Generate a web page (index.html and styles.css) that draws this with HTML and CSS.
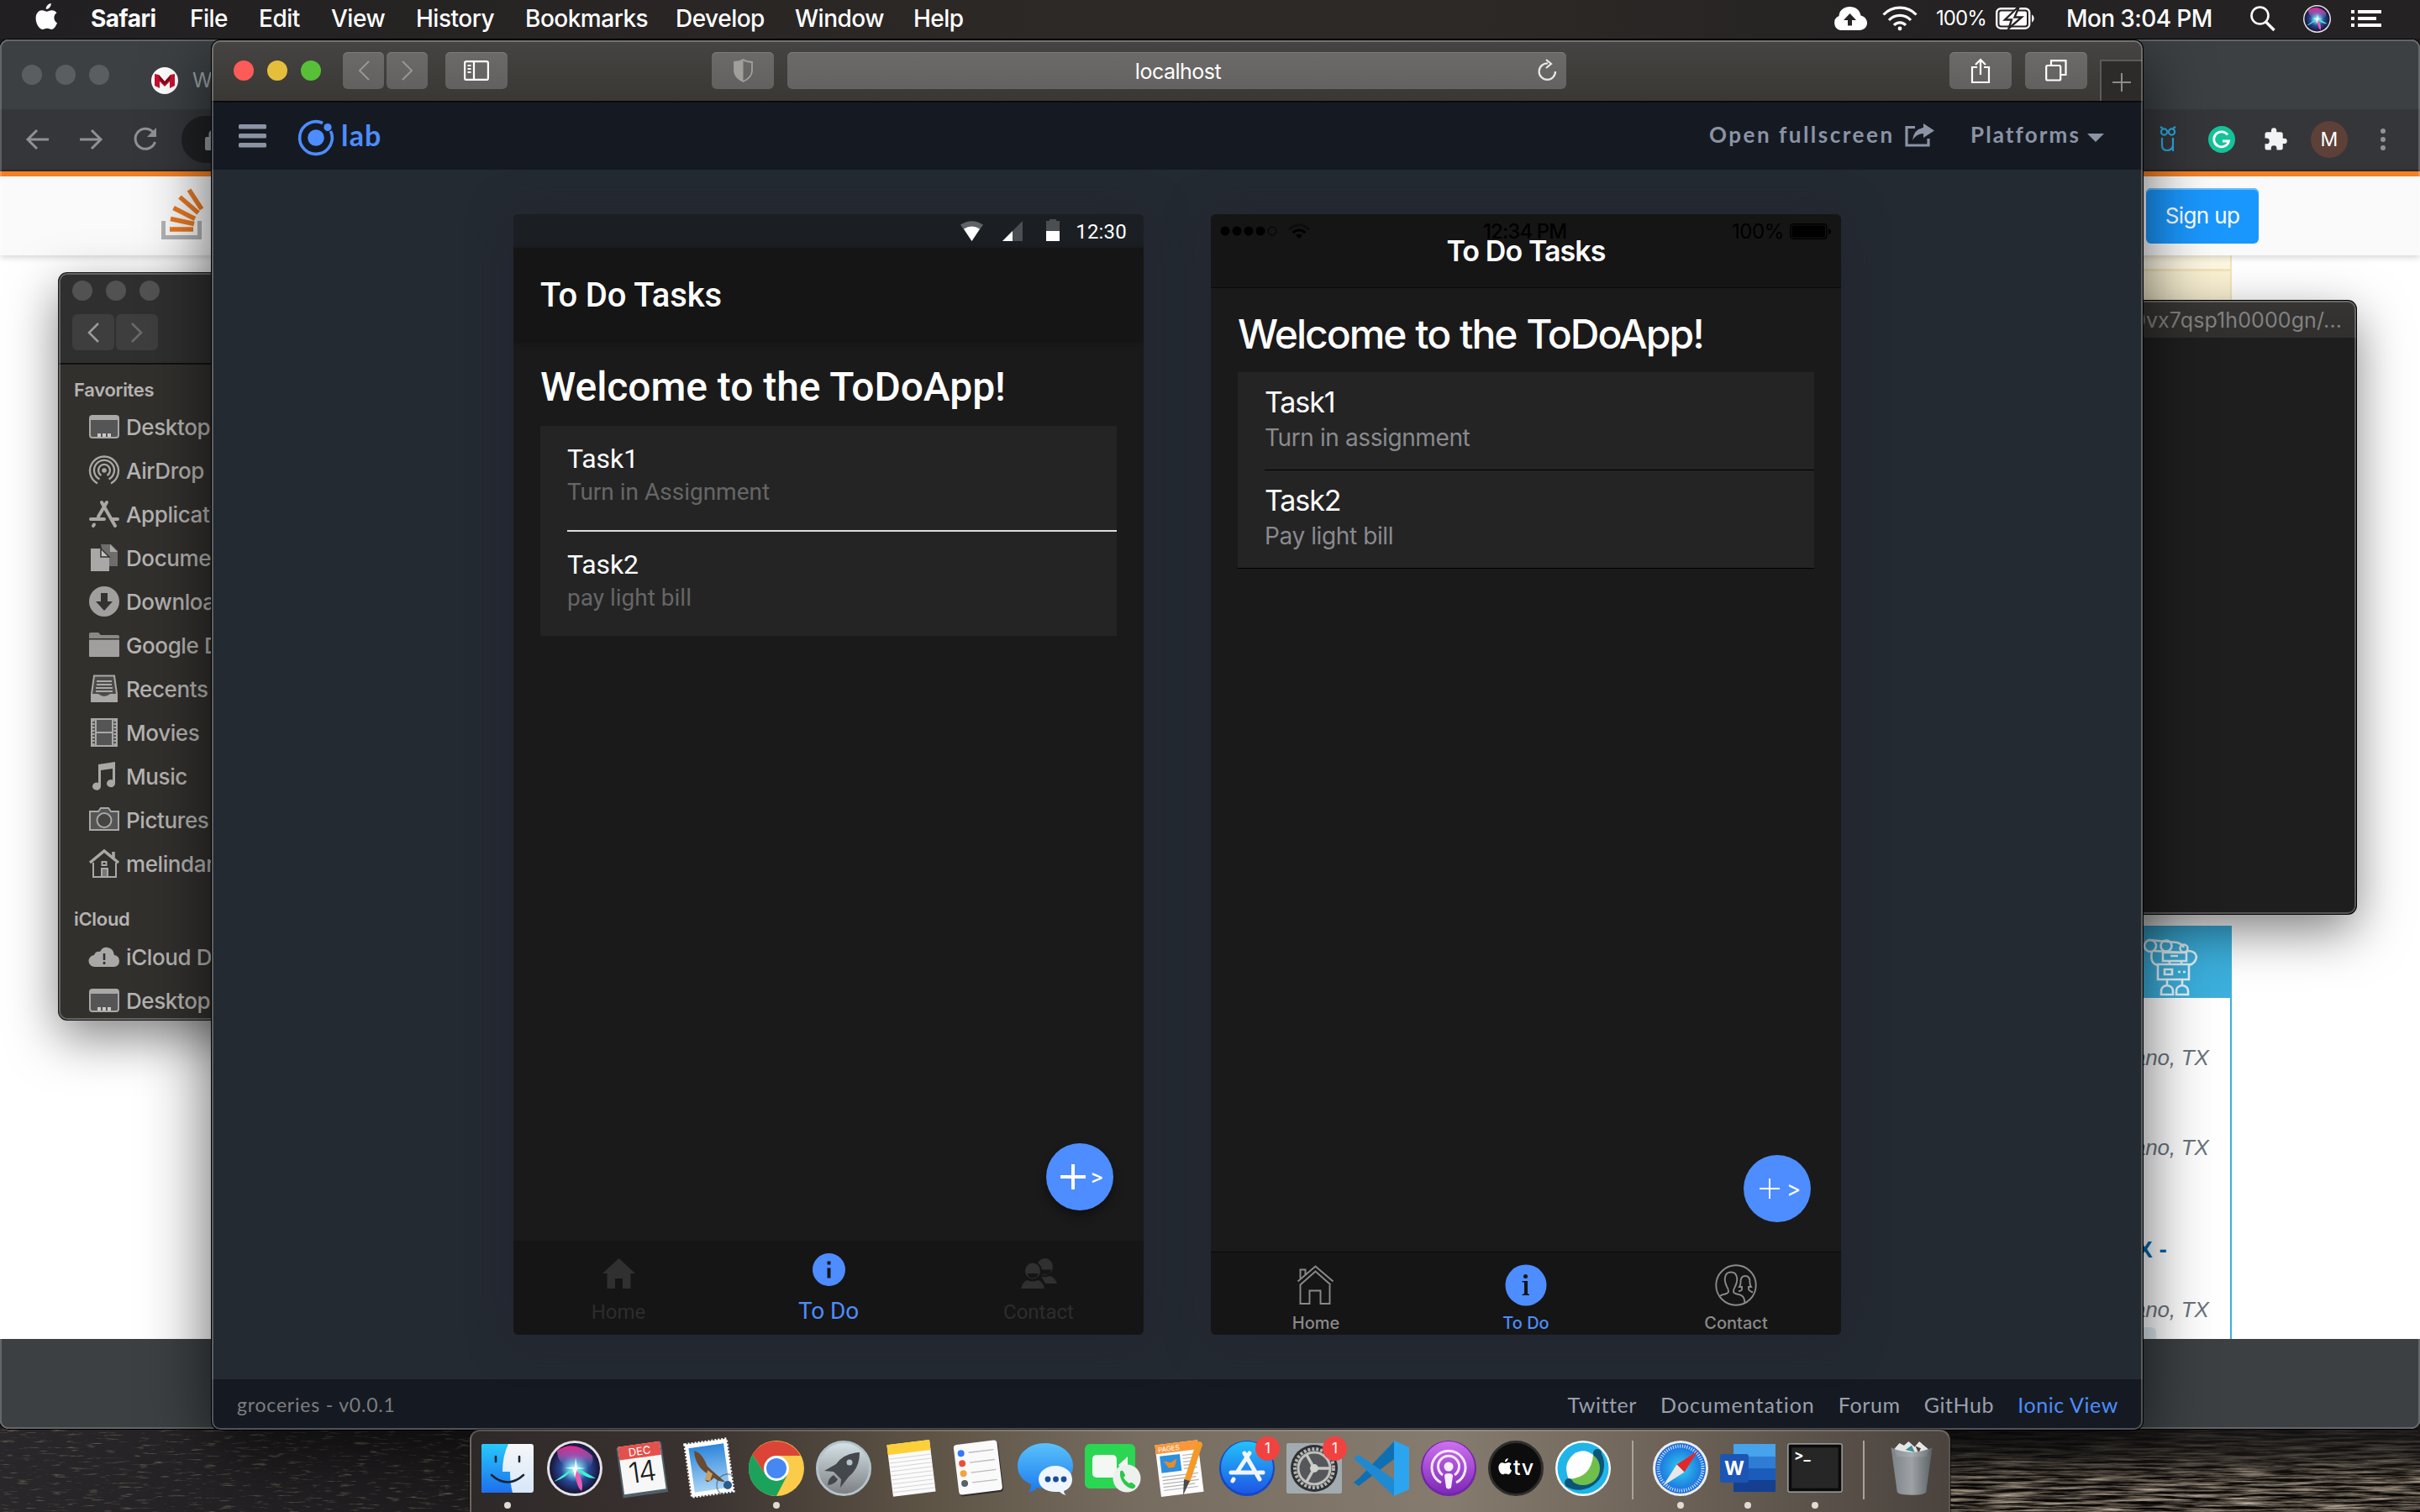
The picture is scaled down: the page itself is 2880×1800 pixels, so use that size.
FILE: index.html
```html
<!DOCTYPE html>
<html lang="en">
<head>
<meta charset="utf-8">
<title>Ionic Lab</title>
<link rel="stylesheet" href="styles.css">
</head>
<body>
<div class="desktop">
  <svg class="wood" width="2880" height="100" viewBox="0 0 2880 100" preserveAspectRatio="none">
    <defs>
      <filter id="grain" x="0" y="0" width="100%" height="100%" color-interpolation-filters="sRGB">
        <feTurbulence type="fractalNoise" baseFrequency="0.018 0.33" numOctaves="5" seed="7"/>
        <feColorMatrix values="1.7 0 0 0 -0.56  1.6 0 0 0 -0.54  1.45 0 0 0 -0.5  0 0 0 0 1"/>
      </filter>
      <filter id="flecks" x="0" y="0" width="100%" height="100%" color-interpolation-filters="sRGB">
        <feTurbulence type="fractalNoise" baseFrequency="0.05 0.4" numOctaves="4" seed="3"/>
        <feColorMatrix values="0 0 0 0 .5  0 0 0 0 .45  0 0 0 0 .38  4 0 0 0 -2.400"/>
      </filter>
      <linearGradient id="woodshade" x1="0" y1="0" x2="0" y2="1"><stop offset="0" stop-color="#141213" stop-opacity=".9"/><stop offset=".3" stop-color="#1c1a19" stop-opacity=".72"/><stop offset=".6" stop-color="#2c2824" stop-opacity=".25"/><stop offset="1" stop-color="#2c2824" stop-opacity=".15"/></linearGradient>
      <linearGradient id="woodbase" x1="0" y1="0" x2="1" y2="0"><stop offset="0" stop-color="#29272a"/><stop offset="1" stop-color="#1b191a"/></linearGradient>
    </defs>
    <rect width="700" height="100" fill="url(#woodbase)"/>
    <rect width="700" height="100" filter="url(#flecks)" opacity=".6"/>
    <svg x="2200" width="680" height="100"><rect width="680" height="100" filter="url(#grain)"/></svg>
    <rect x="2200" width="680" height="100" fill="url(#woodshade)"/>
  </svg>

  <header class="menubar">
    <svg class="apple" width="27" height="32" viewBox="0 0 27 32"><path fill="#fff" d="M18.8 0c.3 3.500-2.600 7-6 7C12.400 3.600 15.500.4 18.800 0zM26 23.300c-1.600 4-3.700 7.600-6.600 7.600-2 0-2.700-1.200-5.300-1.200s-3.400 1.200-5.300 1.200C4.700 30.900.6 24.200.6 17.700.6 11.500 4.400 8.300 8 8.300c2.400 0 4.200 1.500 5.700 1.500 1.400 0 3.500-1.600 6.300-1.600 1.900.1 4 .9 5.500 3-4.500 2.900-3.900 9.600.5 12.100z"/></svg>
    <nav class="menus"><b>Safari</b><span>File</span><span>Edit</span><span>View</span><span>History</span><span>Bookmarks</span><span>Develop</span><span>Window</span><span>Help</span></nav>
    <div class="status">
      <svg width="41" height="28" viewBox="0 0 41 28"><path fill="#fff" d="M9 28a9 9 0 0 1-1.500-17C8 4 13.500 0 20.500 0 27 0 32.500 4 33.500 10.500 38 11.500 41 15 41 19.500 41 24 37 28 32 28z"/><path fill="#262324" d="M20.500 8l7.500 8h-5v6.500h-5V16h-5z"/></svg>
      <svg class="s-wifi" width="42" height="30" viewBox="0 0 42 30" fill="none" stroke="#fff" stroke-width="3.200"><path d="M1.500 10.500a27 27 0 0 1 39 0M8 17a18 18 0 0 1 26 0M14 23a9.500 9.500 0 0 1 14 0"/><circle cx="21" cy="27" r="2.400" fill="#fff" stroke="none"/></svg>
      <span class="s-pct">100%</span>
      <svg class="s-bat" width="46" height="26" viewBox="0 0 46 26"><rect x="1.200" y="1.200" width="39" height="23.500" rx="5" fill="none" stroke="#fff" stroke-width="2.400"/><rect x="4.500" y="4.500" width="32.500" height="17" rx="2" fill="#fff"/><path d="M43 8.500c3.500 1 3.500 8 0 9z" fill="#fff"/><path d="M25 1L11 14.500h8L15.500 25 31 11.500h-8.500L27 1z" fill="#fff" stroke="#262324" stroke-width="2.400"/></svg>
      <span class="s-time">Mon 3:04 PM</span>
      <svg class="s-find" width="30" height="30" viewBox="0 0 30 30" fill="none" stroke="#fff" stroke-width="2.600"><circle cx="11.500" cy="11.500" r="10"/><path d="M18.500 19l10 10" stroke-width="3.400"/></svg>
      <svg class="s-siri" width="33" height="33" viewBox="0 0 66 66"><use href="#siri"/></svg>
      <svg class="s-list" width="36" height="20" viewBox="0 0 36 20" fill="#fff"><path d="M0 0h4v4H0zM0 8h4v4H0zM0 16h4v4H0zM8 0h28v4H8zM8 8h22v4H8zM8 16h28v4H8z"/></svg>
    </div>
  </header>

  <section class="window chrome">
    <div class="c-tabs">
      <i class="light"></i><i class="light"></i><i class="light"></i>
      <svg class="c-fav" width="32" height="32" viewBox="0 0 32 32"><circle cx="16" cy="16" r="16" fill="#fff"/><path d="M4 8l5 1 7 8 7-8 5-1v14l-6 3v-8l-6 6-6-6v8l-6-3z" fill="#c4122f"/><path d="M9 9l7 8 7-8-1 6-6 6-6-6z" fill="#7d0b1c"/></svg>
      <span>W</span>
    </div>
    <div class="c-bar">
      <svg width="27" height="26" viewBox="0 0 27 26" fill="none" stroke="#8f9194" stroke-width="3"><path d="M27 13H2M13 2L2 13l11 11"/></svg>
      <svg width="27" height="26" viewBox="0 0 27 26" fill="none" stroke="#8f9194" stroke-width="3"><path d="M0 13h25M14 2l11 11-11 11"/></svg>
      <svg width="28" height="28" viewBox="0 0 28 28" fill="none" stroke="#8f9194" stroke-width="3"><path d="M24 6.500A12 12 0 1 0 25.500 17"/><path d="M27 0v11H16z" fill="#8f9194" stroke="none"/></svg>
      <div class="omni"><svg width="22" height="26" viewBox="0 0 22 26"><path d="M6 11V7a5 5 0 0 1 10 0v4" fill="none" stroke="#9aa0a6" stroke-width="3"/><rect x="0" y="10" width="22" height="16" rx="2" fill="#9aa0a6"/></svg></div>
      <div class="exts">
        <svg width="20" height="30" viewBox="0 0 20 30" fill="none" stroke="#29a9df" stroke-width="2.200"><circle cx="5.500" cy="6" r="3.600"/><circle cx="14.500" cy="6" r="3.600"/><path d="M1 0l3 2M19 0l-3 2M3 13v9q0 6 6 6t7-6v-9M16 20v9"/></svg>
        <svg width="32" height="32" viewBox="0 0 32 32"><circle cx="16" cy="16" r="16" fill="#15c39a"/><path d="M23 10.500A9 9 0 1 0 24.500 18H17" fill="none" stroke="#fff" stroke-width="2.800"/></svg>
        <svg class="puzzle" width="30" height="30" viewBox="0 0 24 24"><path fill="#f1f3f4" d="M20.500 11H19V7a2 2 0 0 0-2-2h-4V3.500a2.500 2.500 0 0 0-5 0V5H4a2 2 0 0 0-2 2v3.800h1.500a2.700 2.700 0 0 1 0 5.400H2V20a2 2 0 0 0 2 2h3.800v-1.500a2.700 2.700 0 0 1 5.400 0V22H17a2 2 0 0 0 2-2v-4h1.500a2.500 2.500 0 0 0 0-5z"/></svg>
        <b class="avatar">M</b>
        <svg width="6" height="26" viewBox="0 0 6 26" fill="#8f9194"><circle cx="3" cy="3" r="3"/><circle cx="3" cy="13" r="3"/><circle cx="3" cy="23" r="3"/></svg>
      </div>
    </div>
    <div class="so-head">
      <svg width="50" height="60" viewBox="0 0 50 60"><path d="M2.500 38v19.500h43V38" fill="none" stroke="#b1b3b5" stroke-width="5"/><g stroke="#e87922" stroke-width="5.500"><path d="M10 48h28M11 35.500l28 6M14.500 22.500l25.500 13M22 9.500l22 19M33 1l15 23"/></g></svg>
      <a class="signup">Sign up</a>
    </div>
    <div class="so-page">
      <div class="so-yellow"></div>
      <aside class="jobs">
        <div class="robot">
          <svg width="64" height="68" viewBox="0 0 64 68" fill="none" stroke="#e8f4fa" stroke-width="2.600"><ellipse cx="8" cy="8" rx="7" ry="7"/><path d="M6 1l34 3q6 2 8 6M12 14l34 2"/><circle cx="27" cy="8" r="6.500"/><circle cx="48" cy="11" r="4.500"/><path d="M23 16h28v10H23zM32 20h9M31 26v4M45 26v4M17 30h37v18H17zM25 36h9v6h-9zM41 39h3M47 39h3M10 15q-3 14 7 16M52 14q10 0 11 7-1 8-9 10M28 48v7M46 48v7M21 66v-4q0-6 7-7 7 1 7 7v4zM39 66v-4q0-6 7-7 7 1 7 7v4z"/></svg>
        </div>
        <p>ano, TX</p><p class="j2">ano, TX</p><h4>X -</h4><p class="j3">ano, TX</p><i class="chip"></i>
      </aside>
    </div>
    <div class="c-foot"></div>
  </section>

  <section class="window terminal">
    <div class="t-title">0vx7qsp1h0000gn/...</div>
  </section>

  <section class="window finder">
    <div class="f-head">
      <div class="f-lights"><i class="light"></i><i class="light"></i><i class="light"></i></div>
      <div class="f-nav">
        <span><svg width="14" height="24" viewBox="0 0 14 24" fill="none" stroke="#9b9b9b" stroke-width="2.600"><path d="M13 1L2 12l11 11"/></svg></span>
        <span><svg width="14" height="24" viewBox="0 0 14 24" fill="none" stroke="#6a6a6a" stroke-width="2.600"><path d="M1 1l11 11L1 23"/></svg></span>
      </div>
    </div>
    <div class="f-side">
      <h5>Favorites</h5>
      <ul>
        <li><svg viewBox="0 0 36 36"><rect x="1" y="5" width="34" height="26" rx="3" fill="#555" stroke="#a9a8a6" stroke-width="2"/><path d="M1 8h34" stroke="#a9a8a6" stroke-width="4"/><path d="M10 28h4M16 28h4M22 28h4" stroke="#c9c8c6" stroke-width="4"/></svg>Desktop</li>
        <li><svg viewBox="0 0 36 36" fill="none" stroke="#a9a8a6" stroke-width="2.300"><path d="M10 33.500a17 17 0 1 1 16 0M12.500 28.500a12 12 0 1 1 11 0M14.500 24a7 7 0 1 1 7 0"/><circle cx="18" cy="18" r="2.800" fill="#a9a8a6" stroke="none"/></svg>AirDrop</li>
        <li><svg viewBox="0 0 36 36" fill="none" stroke="#a9a8a6" stroke-width="4" stroke-linecap="round"><path d="M15 4l16 28M21 4L11 21M6 30.500L5 32M2 24h16M27 24h7"/></svg>Applicati</li>
        <li><svg viewBox="0 0 36 36"><path d="M14 2h12l8 8v18H20z" fill="#6e6d6b"/><path d="M25 2l9 9h-9z" fill="#a9a8a6"/><path d="M2 7h13l9 9v18H2z" fill="#a9a8a6"/><path d="M14 7l10 10H14z" fill="#c4c3c1" stroke="#333230" stroke-width="1.500"/></svg>Docume</li>
        <li><svg viewBox="0 0 36 36"><circle cx="18" cy="18" r="18" fill="#a09f9d"/><path d="M14 8h8v10h6L18 29 8 18h6z" fill="#333230"/></svg>Downloa</li>
        <li><svg viewBox="0 0 36 36"><path d="M0 10V5q0-2 2-2h9l3 3h20q2 0 2 2v2z" fill="#8a8987"/><path d="M0 11.500h36V31q0 1-1 1H1q-1 0-1-1z" fill="#a09f9d"/></svg>Google D</li>
        <li><svg viewBox="0 0 36 36"><path d="M6 2.500h24L33 24v9H3v-9z" fill="#4c4b49" stroke="#a9a8a6" stroke-width="2"/><path d="M9 9h18M9 13h18M8 17h20M8 21h20" stroke="#a9a8a6" stroke-width="1.800"/><path d="M3 24h8q7 6 14 0h8v9H3z" fill="#a9a8a6"/></svg>Recents</li>
        <li><svg viewBox="0 0 36 36"><rect x="3" y="2" width="30" height="32" fill="#555" stroke="#a9a8a6" stroke-width="2"/><path d="M8 2v32M28 2v32M8 18h20" stroke="#a9a8a6" stroke-width="2"/><path d="M5 3v30M31 3v30" stroke="#a9a8a6" stroke-width="3" stroke-dasharray="2 2"/></svg>Movies</li>
        <li><svg viewBox="0 0 36 36" fill="#a9a8a6"><path d="M11 4l20-3v25.500a5 4.500 0 1 1-3-4V9l-14 2v19a5 4.500 0 1 1-3-4z"/></svg>Music</li>
        <li><svg viewBox="0 0 36 36"><path d="M1 8h10l3-4h9l3 4h9v22H1z" fill="#555" stroke="#a9a8a6" stroke-width="2"/><circle cx="18" cy="18.500" r="8.500" fill="#444" stroke="#a9a8a6" stroke-width="2"/></svg>Pictures</li>
        <li><svg viewBox="0 0 36 36" fill="none" stroke="#a9a8a6" stroke-width="2"><path d="M5 17v17h27V17"/><path d="M1 17L18 3l17 14" stroke-width="3.500"/><path d="M29 4v7" stroke-width="3.500"/><path d="M15.500 16h5v4h-5z"/><path d="M15 34V24h7v10z" fill="#777"/></svg>melindar</li>
      </ul>
      <h5>iCloud</h5>
      <ul>
        <li><svg viewBox="0 0 36 36"><path d="M7 30a7 7 0 0 1-1-14q2-5 7-4 3-6 9-5 7 1 8 9 6 1 6 7 0 6-6 7z" fill="#a9a8a6"/><path d="M18 14v8M18 24v3" stroke="#333230" stroke-width="2.600"/></svg>iCloud D</li>
        <li><svg viewBox="0 0 36 36"><rect x="1" y="5" width="34" height="26" rx="3" fill="#555" stroke="#a9a8a6" stroke-width="2"/><path d="M1 8h34" stroke="#a9a8a6" stroke-width="4"/><path d="M10 28h4M16 28h4M22 28h4" stroke="#c9c8c6" stroke-width="4"/></svg>Desktop</li>
      </ul>
    </div>
  </section>

  <section class="window safari">
    <div class="toolbar">
      <div class="lights"><i class="red"></i><i class="yellow"></i><i class="green"></i></div>
      <span class="tb b-back"><svg width="14" height="24" viewBox="0 0 14 24" fill="none" stroke="#989794" stroke-width="2"><path d="M13 1L2 12l11 11"/></svg></span>
      <span class="tb b-fwd"><svg width="14" height="24" viewBox="0 0 14 24" fill="none" stroke="#989794" stroke-width="2"><path d="M1 1l11 11L1 23"/></svg></span>
      <span class="tb b-side"><svg width="30" height="24" viewBox="0 0 30 24" fill="none" stroke="#fff" stroke-width="2.200"><rect x="1.100" y="1.100" width="27.800" height="21.800" rx="2"/><path d="M12 1v22M4.500 6h4M4.500 10h4M4.500 14h4"/></svg></span>
      <span class="tb b-shield"><svg width="23" height="28" viewBox="0 0 23 28"><path d="M11.500 1Q16 4 22 4v10q0 8-10.500 13Q1 22 1 14V4q6 0 10.500-3z" fill="none" stroke="#a09f9c" stroke-width="1.800"/><path d="M11.500 1v26Q1 22 1 14V4q6 0 10.500-3z" fill="#a09f9c"/></svg></span>
      <div class="url"><span>localhost</span><svg width="24" height="26" viewBox="0 0 24 26" fill="none" stroke="#e8e8e8" stroke-width="2.200"><path d="M13 4.500a9.700 9.700 0 1 0 9 9.500"/><path d="M11 0l6 5-6 5"/></svg></div>
      <span class="tb b-share"><svg width="24" height="31" viewBox="0 0 24 31" fill="none" stroke="#fff" stroke-width="2.200"><path d="M8 11H2v18h20V11h-6M12 20V2M6 8l6-6 6 6"/></svg></span>
      <span class="tb b-tabs"><svg width="26" height="26" viewBox="0 0 26 26" fill="none" stroke="#fff" stroke-width="2.200"><rect x="1.200" y="7" width="17" height="17.500" rx="1.500"/><path d="M7 7V1.200h17.500V18H19"/></svg></span>
      <span class="newtab"><svg width="22" height="22" viewBox="0 0 22 22" stroke="#8c8b88" stroke-width="2"><path d="M11 0v22M0 11h22"/></svg></span>
    </div>
    <div class="lab-head">
      <svg width="33" height="28" viewBox="0 0 33 28" fill="#8b93a5"><rect width="33" height="5.500" rx="1.500"/><rect y="11" width="33" height="5.500" rx="1.500"/><rect y="22" width="33" height="5.500" rx="1.500"/></svg>
      <svg class="ionic" width="42" height="42" viewBox="0 0 42 42"><path d="M29 3.500A19.300 19.300 0 1 0 38.500 13" fill="none" stroke="#4d8dff" stroke-width="3.600"/><circle cx="21" cy="21" r="9.800" fill="#4d8dff"/><circle cx="35" cy="8.500" r="4.600" fill="#4d8dff"/></svg>
      <span class="lab">lab</span>
      <span class="full">Open fullscreen</span>
      <svg class="full-i" width="35" height="28" viewBox="0 0 35 28"><path d="M12 4.500H2V26h26v-8" fill="none" stroke="#8b93a5" stroke-width="3.200"/><path d="M22 0l13 8.500-13 8.500v-5q-8 0-13 8 1-13 13-15z" fill="#8b93a5"/></svg>
      <span class="plat">Platforms</span><i class="tri"></i>
    </div>
    <main class="lab-body">
      <article class="phone md">
        <div class="md-status">
          <svg width="27" height="24" viewBox="0 0 27 24"><path d="M0 4.500Q13.500-4 27 4.500L13.500 24z" fill="#5f6366"/><path d="M4 9.500q9.500-6 19 0L13.500 24z" fill="#fff"/></svg>
          <svg class="md-sig" width="24" height="24" viewBox="0 0 24 24"><path d="M24 0v24H0z" fill="#4b4e52"/><path d="M12 12v12H0z" fill="#fff"/></svg>
          <svg class="md-bat" width="16" height="26" viewBox="0 0 16 26"><path d="M4 0h8v2h4v24H0V2h4z" fill="#4b4e52"/><path d="M0 14h16v12H0z" fill="#fff"/></svg>
          <span>12:30</span>
        </div>
        <div class="md-title">To Do Tasks</div>
        <div class="content">
          <h1>Welcome to the ToDoApp!</h1>
          <div class="item"><h2>Task1</h2><p>Turn in Assignment</p></div>
          <div class="item"><h2>Task2</h2><p>pay light bill</p></div>
          <div class="fab"><svg width="30" height="30" viewBox="0 0 30 30" stroke="#fff" stroke-width="4"><path d="M15 0v30M0 15h30"/></svg><span>&gt;</span></div>
        </div>
        <nav class="tabs">
          <a><svg width="39" height="36" viewBox="0 0 39 36" fill="#303030"><path d="M19.500 0L39 18h-5.500v18H24V24h-9v12H5.500V18H0z"/></svg><span>Home</span></a>
          <a class="on"><svg width="39" height="39" viewBox="0 0 39 39"><circle cx="19.500" cy="19.500" r="19.500" fill="#4d8dff"/><path d="M17.500 9.500h4v4h-4zM17.500 17.500h4v12h-4z" fill="#151515"/></svg><span>To Do</span></a>
          <a><svg width="43" height="36" viewBox="0 0 43 36" fill="#303030"><ellipse cx="28.500" cy="10" rx="9.500" ry="10"/><path d="M24 21q3 2.500 10 0 6 1 9 9H29z"/><path d="M22 13.500h14q-1 5-5 5.500h-6z" fill="#151515"/><ellipse cx="14" cy="15" rx="10" ry="10.500" stroke="#151515" stroke-width="2"/><path d="M0 36q2-8 7.500-10 6.500 3 13 0 5.500 2 7.500 10z"/><path d="M7.500 18h13q-1 5.500-6.500 5.500T7.500 18z" fill="#151515"/></svg><span>Contact</span></a>
        </nav>
      </article>
      <article class="phone ios">
        <div class="ios-status">
          <svg width="68" height="12" viewBox="0 0 68 12"><circle cx="6" cy="6" r="5.500"/><circle cx="20" cy="6" r="5.500"/><circle cx="34" cy="6" r="5.500"/><circle cx="48" cy="6" r="5.500"/><circle cx="62" cy="6" r="5" fill="none" stroke="#000"/></svg>
          <svg class="i-wifi" width="26" height="18" viewBox="0 0 26 18" fill="none" stroke="#000" stroke-width="3"><path d="M1 7q12-10 24 0" stroke="#0c0c0c"/><path d="M5.500 11q7.500-6.500 15 0"/><path d="M9 14q4-3 8 0l-4 4z" fill="#000" stroke="none"/></svg>
          <span class="i-time">12:34 PM</span>
          <span class="i-pct">100%</span>
          <svg width="49" height="19" viewBox="0 0 49 19"><rect x=".8" y=".8" width="43" height="17.400" rx="3" fill="none" stroke="#000" stroke-width="1.400"/><rect x="2.500" y="2.500" width="39.500" height="14" rx="1.500"/><path d="M46 6q3 1 3 3.500T46 13z"/></svg>
        </div>
        <div class="ios-title">To Do Tasks</div>
        <div class="content">
          <h1>Welcome to the ToDoApp!</h1>
          <div class="item"><h2>Task1</h2><p>Turn in assignment</p></div>
          <div class="item"><h2>Task2</h2><p>Pay light bill</p></div>
          <div class="fab"><svg width="24" height="24" viewBox="0 0 24 24" stroke="#fff" stroke-width="2"><path d="M12 0v24M0 12h24"/></svg><span>&gt;</span></div>
        </div>
        <nav class="tabs">
          <a><svg width="46" height="50" viewBox="0 0 46 50" fill="none" stroke="#8a8a8a" stroke-width="1.900"><path d="M4.500 23.500V47h11V31.500h13V47h11V23.500M1.500 20.500l21-18 21 18M4.500 24.500L22.500 8.500l18 16M4.500 18V6.500h6v6"/></svg><span>Home</span></a>
          <a class="on"><svg width="50" height="50" viewBox="0 0 50 50"><circle cx="25" cy="25" r="24.500" fill="#4d8dff"/><circle cx="24.500" cy="14.500" r="2.500" fill="#151515"/><path d="M20.500 20h6.500v15l2 1v1h-8.500v-1l2.500-1V21.500h-2.500z" fill="#151515"/></svg><span>To Do</span></a>
          <a><svg width="50" height="50" viewBox="0 0 50 50" fill="none" stroke="#8a8a8a" stroke-width="1.900"><circle cx="25" cy="25" r="23.700"/><path d="M6 38q2-2 6-2.500 4-1 4-3 0-3-2-6-3-6-2-11 1-6 7-6t7 6q1 5-2 11-2 3-2 6 0 2 4 3 8 1 9 7 .500 2 0 4M28 32q4 0 4-2.500V27h-3q2-3 1.500-7 .500-6 5.500-6t5.500 6q-.500 4 1.500 7h-3v2.500q0 2 5 4"/></svg><span>Contact</span></a>
        </nav>
      </article>
    </main>
    <footer class="lab-foot"><span class="ver">groceries - v0.0.1</span><a>Twitter</a><a class="wide">Documentation</a><a>Forum</a><a>GitHub</a><a class="hot">Ionic View</a></footer>
  </section>

  <footer class="dock">
    <div class="app run"><svg viewBox="0 0 66 66"><defs><linearGradient id="fl" x1="0" y1="0" x2="0" y2="1"><stop offset="0" stop-color="#27c9fb"/><stop offset="1" stop-color="#1e6fee"/></linearGradient><linearGradient id="fr" x1="0" y1="0" x2="0" y2="1"><stop offset="0" stop-color="#f6f7f9"/><stop offset="1" stop-color="#d7e6f9"/></linearGradient></defs><rect x="2" y="4" width="62" height="58" rx="3" fill="url(#fr)"/><path d="M5 4h29q-7 14-7 33h9q0 14 3 25H5q-3 0-3-3V7q0-3 3-3z" fill="url(#fl)"/><path d="M14 41q19 17 38 0M19 19v6M47 19v6" fill="none" stroke="#1b2532" stroke-width="2.600" stroke-linecap="round"/></svg></div>
    <div class="app"><svg viewBox="0 0 66 66"><defs><radialGradient id="sg"><stop offset="0" stop-color="#fff"/><stop offset=".2" stop-color="#7fd6f0"/><stop offset=".55" stop-color="#2a4a98"/><stop offset="1" stop-color="#171335"/></radialGradient><linearGradient id="sp" x1="0" y1="0" x2="0" y2="1"><stop offset="0" stop-color="#e02a8c"/><stop offset=".5" stop-color="#c85cc0" stop-opacity=".6"/><stop offset="1" stop-color="#20b8c8" stop-opacity="0"/></linearGradient></defs><g id="siri"><circle cx="33" cy="33" r="33" fill="#e4e2e4"/><circle cx="33" cy="33" r="30" fill="url(#sg)"/><path d="M12 12q20-14 42 6 4 18-21 15Q12 30 12 12z" fill="url(#sp)"/><path d="M33 31L8 49q15-4 25-18zM34 31l24 14q-16 0-24-14z" fill="#3ff0d0"/><path d="M33 32q12 16 8 28-7-6-8-28z" fill="#f05ab0"/><path d="M33 32l1-12 2 12 10 1-10 1-3 10-2-10-10-2z" fill="#fff" opacity=".9"/></g></svg></div>
    <div class="app"><svg viewBox="0 0 66 66"><g transform="rotate(-8 33 33)"><rect x="6" y="5" width="54" height="60" fill="#4f6069"/><rect x="8" y="4" width="50" height="57" fill="#f7f7f7"/><rect x="8" y="4" width="50" height="16" fill="#e4504c"/><text x="33" y="17" font-size="13" fill="#fff" text-anchor="middle">DEC</text><text x="33" y="49" font-size="34" fill="#1c1c1c" font-weight="300" text-anchor="middle" textLength="33">14</text></g></svg></div>
    <div class="app"><svg viewBox="0 0 66 66"><defs><linearGradient id="ml" x1="0" y1="0" x2="0" y2="1"><stop offset="0" stop-color="#2f86dc"/><stop offset="1" stop-color="#a8d4f4"/></linearGradient></defs><g transform="rotate(-8 33 33)"><rect x="8" y="1" width="50" height="63" fill="#fff" stroke="#fff" stroke-width="3" stroke-dasharray="2 2"/><rect x="12" y="6" width="42" height="53" fill="url(#ml)"/><path d="M18 10q9 3 13 20l4 5 15 17q-9-2-13-7-3 3-8 4l-3-3 4-7q-13-10-12-29z" fill="#6b4a30"/><path d="M31 35l5 5-4 8-6-2z" fill="#c9a063"/></g><circle cx="55" cy="53" r="13" fill="none" stroke="#33424f" stroke-width="1.500" opacity=".5"/><circle cx="55" cy="53" r="5" fill="#2b5c8b"/></svg></div>
    <div class="app run"><svg viewBox="0 0 66 66"><circle cx="33" cy="33" r="33" fill="#fccb49"/><path d="M4.400 16.500A33 33 0 0 1 61.600 18H33L20 40.500z" fill="#dc4437"/><path d="M4.400 16.500A33 33 0 0 0 33 66L46 41 33 48 20 40.500z" fill="#1da25c"/><circle cx="33" cy="33" r="15" fill="#fff"/><circle cx="33" cy="33" r="12" fill="#4688f1"/></svg></div>
    <div class="app"><svg viewBox="0 0 66 66"><defs><linearGradient id="lp" x1="0" y1="0" x2="0" y2="1"><stop offset="0" stop-color="#d6e4e9"/><stop offset="1" stop-color="#7c7e81"/></linearGradient></defs><circle cx="33" cy="33" r="31.500" fill="url(#lp)" stroke="#b4c3cb" stroke-width="3"/><path d="M52 14Q33 15 24 28L10 36l11 1 9 9-1 10 10-13Q52 33 52 14z" fill="#44484d"/><path d="M21 41l5 5q-3 6-12 7 1-9 7-12z" fill="#44484d"/><circle cx="40" cy="26" r="3.500" fill="#b4c3cb"/></svg></div>
    <div class="app"><svg viewBox="0 0 66 66"><g transform="rotate(-7 33 33)"><rect x="8" y="2" width="51" height="62" fill="#fbfbfb"/><rect x="8" y="2" width="51" height="12" fill="#fdd039"/><path d="M8 19h51M8 24h51M8 29h51M8 34h51M8 39h51M8 44h51M8 49h51M8 54h51M8 59h51" stroke="#d5d5d5"/></g></svg></div>
    <div class="app"><svg viewBox="0 0 66 66"><g transform="rotate(-7 33 33)"><rect x="8" y="4" width="52" height="60" rx="4" fill="#2c2c2e"/><rect x="7" y="2" width="52" height="60" rx="4" fill="#fafafa"/><circle cx="15" cy="13" r="4" fill="#3478f6"/><circle cx="15" cy="25" r="4" fill="#ea4e3d"/><circle cx="15" cy="37" r="4" fill="#f1a33c"/><circle cx="15" cy="49" r="4" fill="#5b6069"/><path d="M24 13h30M24 25h30M24 37h30M24 49h30" stroke="#bbb" stroke-width="1.300"/></g></svg></div>
    <div class="app"><svg viewBox="0 0 66 66"><defs><linearGradient id="ms" x1="0" y1="0" x2="0" y2="1"><stop offset="0" stop-color="#5ac2fa"/><stop offset="1" stop-color="#1d7bf0"/></linearGradient></defs><path d="M33 3c19 0 33 12 33 27S52 57 33 57q-6 0-10-1-3 5-11 5 5-3 4-9Q0 45 0 30C0 15 14 3 33 3z" fill="url(#ms)"/><path d="M45 30c11 0 20 7 20 16 0 7-4 12-10 14q0 3 3 5-5-1-8-4h-5c-11 0-20-6-20-15s9-16 20-16z" fill="#eef5fc"/><circle cx="36" cy="46" r="3.400" fill="#174e96"/><circle cx="45.500" cy="46" r="3.400" fill="#174e96"/><circle cx="55" cy="46" r="3.400" fill="#174e96"/></svg></div>
    <div class="app"><svg viewBox="0 0 66 66"><rect x="0" y="4" width="60" height="53" rx="6" fill="#2bd653"/><rect x="9" y="17" width="29" height="27" rx="5" fill="#f4f8f4"/><path d="M40 29l11-10v24z" fill="#f4f8f4"/><circle cx="50" cy="45" r="16.500" fill="#edf1ee"/><path d="M42 37q2-3 4 0l2 4q0 2-2 3 3 5 7 7 2-2 3-1l4 3q1 2-2 4-5 1-11-5-6-7-5-15z" fill="#2bc84d"/></svg></div>
    <div class="app"><svg viewBox="0 0 66 66"><g transform="rotate(-7 33 33)"><rect x="7" y="2" width="51" height="62" fill="#fdfdfd"/><rect x="7" y="2" width="51" height="11" fill="#f9973a"/><text x="10" y="11" font-size="8" fill="#fff">PAGES</text><rect x="11" y="16" width="24" height="20" fill="#2b8fe0"/><path d="M15 22l8 3 8-4-4 10h-7z" fill="#ef8a1c"/><path d="M38 18h16M38 22h16M38 26h16M38 30h16M38 34h16M11 41h43M11 45h40M11 49h43M11 53h38M11 57h41" stroke="#b3b3b3" stroke-width="1.200"/></g><path d="M52 4q4-5 7-2 2 2 0 6L45 50l-7-2z" fill="#f39a2b"/><path d="M45 48l-8 17 1-19z" fill="#4a4b4d"/></svg></div>
    <div class="app"><svg viewBox="0 0 66 66"><defs><linearGradient id="as" x1="0" y1="0" x2="0" y2="1"><stop offset="0" stop-color="#24c2fa"/><stop offset="1" stop-color="#1d55e6"/></linearGradient></defs><circle cx="33" cy="33" r="33" fill="#1348c4"/><circle cx="33" cy="32" r="31" fill="url(#as)"/><path d="M30 15l18 31M36 15L21 38M17 46l-1 2M14 38h26M47 38h5" stroke="#f1f5fa" stroke-width="5" stroke-linecap="round"/></svg><b class="badge">1</b></div>
    <div class="app"><svg viewBox="0 0 66 66"><rect x="0" y="3" width="66" height="60" rx="2" fill="#a2abb0"/><circle cx="33" cy="33" r="28" fill="#2f3032"/><circle cx="33" cy="33" r="23" fill="#45474a" stroke="#b4b4b2" stroke-width="4" stroke-dasharray="3 2"/><circle cx="33" cy="33" r="19" fill="#55575a" stroke="#c0c0be" stroke-width="3"/><path d="M33 33l18 0M33 33l-9-16M33 33l-9 16" stroke="#c6c6c4" stroke-width="3.500"/><circle cx="33" cy="33" r="5" fill="#d0d0ce"/></svg><b class="badge">1</b></div>
    <div class="app"><svg viewBox="0 0 66 66"><path d="M48 1L8 43l-8 7 6 4 42-32z" fill="#0f6fb3"/><path d="M6 17l-6 4 48 45V46z" fill="#1f8ad2"/><path d="M48 0l18 8v50l-18 8z" fill="#2ba5f0"/></svg></div>
    <div class="app"><svg viewBox="0 0 66 66"><defs><linearGradient id="pc" x1="0" y1="0" x2="0" y2="1"><stop offset="0" stop-color="#cd70f0"/><stop offset="1" stop-color="#7e29b8"/></linearGradient></defs><circle cx="33" cy="33" r="33" fill="#7424a8"/><circle cx="33" cy="32" r="31" fill="url(#pc)"/><g fill="none" stroke="#f4e9fa" stroke-width="3"><path d="M24 50a20 20 0 1 1 18 0"/><path d="M26 41a12.500 12.500 0 1 1 14 0"/></g><circle cx="33" cy="31" r="5.500" fill="#f7effb"/><path d="M28 42q0-3 5-3t5 3l-2 14q-3 3-6 0z" fill="#f7effb"/></svg></div>
    <div class="app"><svg viewBox="0 0 66 66"><circle cx="33" cy="33" r="31.500" fill="#0c0c0c" stroke="#2e2e2e" stroke-width="3"/><path transform="translate(12 21) scale(.62)" fill="#fff" d="M18.800 0c.3 3.500-2.600 7-6 7C12.400 3.600 15.500.4 18.800 0zM26 23.300c-1.600 4-3.700 7.600-6.600 7.600-2 0-2.700-1.200-5.300-1.200s-3.400 1.200-5.300 1.200C4.700 30.900.6 24.200.6 17.700.6 11.500 4.400 8.300 8 8.300c2.400 0 4.200 1.500 5.700 1.500 1.400 0 3.500-1.600 6.300-1.600 1.900.1 4 .9 5.500 3-4.500 2.900-3.900 9.600.5 12.100z"/><text x="30" y="41" font-size="25" font-weight="500" fill="#fff" textLength="24">tv</text></svg></div>
    <div class="app"><svg viewBox="0 0 66 66"><circle cx="33" cy="33" r="33" fill="#fff"/><circle cx="33" cy="33" r="30.500" fill="#20b5e8"/><path d="M53 12A30 30 0 0 1 12 54z" fill="#0b5577"/><circle cx="33" cy="33" r="20" fill="#70bf4b"/><path d="M45 17Q43 44 16 46 8 28 22 16q12-8 23 1z" fill="#fff"/><circle cx="50" cy="15" r="5" fill="#0b5577"/><circle cx="16" cy="50" r="5" fill="#0b5577"/></svg></div>
    <i class="sep"></i>
    <div class="app run"><svg viewBox="0 0 66 66"><defs><radialGradient id="sf"><stop offset="0" stop-color="#2fd0ee"/><stop offset="1" stop-color="#1a66de"/></radialGradient></defs><circle cx="33" cy="33" r="33" fill="#eceef0"/><circle cx="33" cy="33" r="30" fill="url(#sf)"/><circle cx="33" cy="33" r="26.500" fill="none" stroke="#e4f1fb" stroke-width="4" stroke-dasharray="1 1.800"/><path d="M54 12L37.500 37.500 28.500 28.500z" fill="#e5252a"/><path d="M12 54l16.500-25.500 9 9z" fill="#e8e8e8"/></svg></div>
    <div class="app run"><svg viewBox="0 0 66 66"><path d="M16 4h50v15H16z" fill="#46a3ec"/><path d="M16 19h50v14H16z" fill="#2f7cd4"/><path d="M16 33h50v14H16z" fill="#1b5bbb"/><path d="M16 47h50v14H16z" fill="#153f90"/><rect x="0" y="16" width="34" height="34" rx="3" fill="#1c55b3"/><text x="17" y="41" font-size="23" font-weight="700" fill="#fff" text-anchor="middle">W</text></svg></div>
    <div class="app run"><svg viewBox="0 0 66 66"><rect x="1" y="4" width="64" height="57" rx="2" fill="#262626" stroke="#a9adaf" stroke-width="1.500"/><rect x="3.500" y="6.500" width="59" height="52" fill="none" stroke="#0a0a0a" stroke-width="3.500"/><text x="8" y="23" font-size="17" font-weight="700" fill="#fff">&gt;_</text></svg></div>
    <i class="sep s2"></i>
    <div class="app trash"><svg viewBox="0 0 66 72"><defs><linearGradient id="tr"><stop offset="0" stop-color="#7f868b"/><stop offset=".5" stop-color="#a4a9ad"/><stop offset="1" stop-color="#5d6468"/></linearGradient></defs><path d="M10 12l7-8 6 3 6-5 8 7 6-7 6 5 7 6-4 9H14z" fill="#e6e6e4"/><path d="M25 13l8-6 4 9z" fill="#3a8f9b"/><path d="M38 8l7 3-3 6z" fill="#4b3b3a"/><path d="M6 10q26 12 54 0l-8 58q-1 4-19 4t-19-4z" fill="url(#tr)" opacity=".93"/></svg></div>
  </footer>
</div>
</body>
</html>
```
FILE: styles.css
```css
* { box-sizing: border-box; }
body { margin: 0; background: #1c1a1a; font-family: Inter, "Liberation Sans", sans-serif; }
h1, h2, h4, h5, p, ul { margin: 0; padding: 0; font-weight: 400; }
svg { display: block; flex: none; overflow: visible; }
.desktop { position: relative; width: 2880px; height: 1800px; overflow: hidden; }
.wood { position: absolute; left: 0; top: 1700px; overflow: hidden; }

.menubar { position: absolute; inset: 0 0 auto 0; height: 46px; background: linear-gradient(90deg, #211f21, #2d2926 45%, #2d2926 60%, #242223 80%); display: flex; align-items: center; color: #fff; font-size: 28px; line-height: 44px; z-index: 1; }
.apple { margin: -6px 39px 0 42px; }
.menus { display: grid; grid-template-columns: 118px 82px 86px 101px 130px 179px 142px 141px 80px; letter-spacing: -.5px; font-weight: 500; margin-top: -2px; }
.menus b { font-weight: 700; }
.status { display: flex; align-items: center; margin-left: auto; padding-right: 46px; font-weight: 500; margin-top: -2px; }
.s-wifi { margin-left: 18px; }
.s-pct { font-size: 24px; font-weight: 400; width: 61px; margin: 0 10px 0 22px; letter-spacing: -.9px; white-space: nowrap; }
.s-time { width: 173px; margin-left: 38px; white-space: nowrap; letter-spacing: -.6px; }
.s-find { margin-left: 46px; }
.s-siri { margin-left: 33px; }
.s-list { margin-left: 24px; }

.window { position: absolute; border-radius: 10px; overflow: hidden; }
.window::after { content: ""; position: absolute; inset: 0; border: 2px solid rgba(255,255,255,.25); border-radius: 10px; pointer-events: none; }
.light { width: 24px; height: 24px; border-radius: 50%; background: #5b5e61; }

.chrome { left: 0; top: 47px; width: 2880px; height: 1654px; background: #fff; box-shadow: 0 0 0 1px #000; }
.chrome::after { border-color: rgba(255,255,255,.2); }
.c-tabs { height: 83px; background: #3c4043; display: flex; align-items: center; gap: 16px; padding: 0 0 0 26px; color: #9aa0a6; font-size: 24px; }
.c-fav { margin: 14px 0 0 34px; }
.c-tabs span { margin-top: 13px; margin-left: 1px; }
.c-bar { height: 74px; background: #35363a; border-bottom: 2px solid #2a2b2e; display: flex; align-items: center; padding-left: 31px; gap: 37px; }
.omni { flex: 1; height: 56px; margin-left: -8px; background: #202124; border-radius: 28px; display: flex; align-items: center; padding-left: 28px; }
.exts { display: flex; align-items: center; gap: 38px; width: 338px; padding-left: 28px; margin-left: -37px; background: #35363a; height: 60px; }
.puzzle { margin-left: -5px; }
.avatar { width: 44px; height: 44px; border-radius: 50%; background: #5d4037; color: #fff; font-size: 23px; font-weight: 400; line-height: 44px; text-align: center; margin: 0 1px 0 -11px; }
.so-head { height: 100px; border-top: 6px solid #f48024; background: #fafafa; box-shadow: 0 2px 8px rgba(0,0,0,.18); display: flex; justify-content: space-between; align-items: center; padding: 0 192px; position: relative; }
.so-head > svg { margin-top: -4px; }
.signup { width: 134px; height: 66px; background: #1a97fd; border-radius: 6px; box-shadow: inset 0 2px 0 #66bcff; color: #fff; font-size: 26px; line-height: 66px; text-align: center; letter-spacing: -.6px; }
.so-page { height: 1290px; padding-left: 2300px; }
.so-yellow { width: 356px; height: 240px; background: linear-gradient(#fdf7e2 16px, #f1e5bc 16px, #f1e5bc 19px, #fbf2d4 19px); border-right: 2px solid #f1e5bc; }
.jobs { width: 356px; height: 492px; margin-top: 558px; border-right: 2px solid #3cafdc; color: #6a737c; overflow: hidden; }
.robot { width: 356px; height: 86px; background: #3cafdc; padding: 16px 0 0 251px; }
.jobs p { font: italic 26px/30px "Liberation Sans", Arial, sans-serif; padding-left: 239px; letter-spacing: -.2px; margin-top: 56px; }
.jobs .j2 { margin-top: 77px; }
.jobs .j3 { margin-top: 40px; }
.jobs h4 { font: 700 28px/32px "Liberation Sans", Arial, sans-serif; color: #0064a9; margin-top: 91px; padding-left: 243px; }
.chip { display: block; width: 266px; height: 14px; margin-top: 6px; background: #e1ecf4; border-radius: 6px 6px 0 0; }
.c-foot { height: 107px; background: #3c4043; }

.terminal { left: 2300px; top: 358px; width: 504px; height: 730px; background: #1e1e1e; box-shadow: 0 0 0 1px #000, 0 20px 60px rgba(0,0,0,.5); }
.t-title { height: 44px; background: linear-gradient(#363533, #302f2e); color: #828180; font-size: 25px; line-height: 47px; text-align: right; padding-right: 17px; letter-spacing: .1px; }

.finder { left: 70px; top: 325px; width: 400px; height: 889px; background: #32302d; box-shadow: 0 0 0 1px #1a1a1a, 0 20px 60px rgba(0,0,0,.5); color: #b5b4b2; }
.f-head { height: 109px; background: #2f2f2f; border-bottom: 2px solid #111; padding: 9px 16px 0; }
.f-lights { display: flex; gap: 16px; }
.f-head .light { background: #525252; }
.f-nav { display: flex; gap: 2px; margin-top: 16px; }
.f-nav span { width: 50px; height: 43px; border-radius: 6px; background: #3e3e3e; display: flex; align-items: center; justify-content: center; }
.finder h5 { font-size: 22px; line-height: 44px; font-weight: 600; padding-left: 18px; margin-top: 8px; letter-spacing: -.3px; }
.finder ul { list-style: none; margin-top: -4px; padding-left: 36px; }
.finder li { height: 52px; display: flex; align-items: center; gap: 8px; font-size: 26px; font-weight: 500; letter-spacing: -.4px; white-space: nowrap; }
.finder li svg { width: 36px; height: 36px; }
.finder ul + h5 { margin-top: 18px; }
.finder h5 ~ h5 + ul { margin-top: -3px; }

.safari { left: 252px; top: 48px; width: 2298px; height: 1654px; background: #242a31; box-shadow: 0 0 0 1px #000, 0 24px 80px rgba(0,0,0,.65); }
.toolbar { height: 74px; background: linear-gradient(#454442, #393835); border-bottom: 2px solid #0a0a0a; display: flex; align-items: center; padding: 0 1px; }
.lights { display: flex; gap: 16px; margin-left: 25px; }
.lights i { width: 24px; height: 24px; border-radius: 50%; }
.red { background: #fc5b57; }
.yellow { background: #e5bf3c; }
.green { background: #57c038; }
.tb { height: 44px; background: linear-gradient(#6b6a68, #62615f); border-radius: 6px; box-shadow: inset 0 1px 0 #7d7c7a; display: flex; align-items: center; justify-content: center; width: 74px; flex: none; }
.b-back { width: 49px; margin-left: 26px; }
.b-fwd { width: 49px; margin-left: 3px; }
.b-side { margin-left: 21px; }
.b-shield { margin-left: 243px; }
.b-share { margin-left: 456px; }
.b-tabs { margin-left: 16px; }
.url { width: 927px; height: 44px; margin-left: 16px; background: linear-gradient(#6b6a68, #646361); border-radius: 6px; box-shadow: inset 0 1px 0 #7d7c7a; display: flex; align-items: center; color: #fff; font-size: 25px; padding-right: 11px; }
.url span { flex: 1; text-align: center; padding-left: 38px; padding-top: 1px; letter-spacing: -.5px; }
.newtab { margin-left: 15px; flex: 1; align-self: flex-end; height: 49px; background: #2c2b29; border: 2px solid #5b5a58; border-width: 2px 0 0 2px; display: flex; align-items: center; justify-content: center; padding-top: 2px; }
.lab-head { height: 80px; background: #151a22; display: flex; align-items: center; padding-left: 32px; padding-right: 1px; font-family: Lato, "Open Sans", sans-serif; color: #8b93a5; font-weight: 700; }
.ionic { margin-left: 38px; margin-top: 3px; }
.lab { color: #4d8dff; font-size: 34px; width: 60px; margin-left: 9px; letter-spacing: 1.200px; margin-top: -3px; }
.full { font-size: 26px; letter-spacing: 2.500px; margin-left: auto; width: 218px; white-space: nowrap; margin-top: -4px; }
.full-i { margin: -3px 43px 0 15px; }
.plat { font-size: 26px; letter-spacing: 2.100px; width: 129px; white-space: nowrap; margin-top: -4px; }
.tri { border: 10px solid transparent; border-top: 10px solid #8b93a5; border-bottom: 0; margin: 3px 45px 0 10px; }
.lab-body { height: 1440px; display: flex; justify-content: center; gap: 80px; padding-top: 53px; }
.lab-foot { height: 60px; background: #151a22; display: flex; align-items: center; font: 400 25px/30px Lato, "Open Sans", sans-serif; letter-spacing: .6px; color: #9a9fac; padding: 0 29px 0 30px; gap: 28px; }
.ver { margin-right: auto; font-size: 23px; color: #7d7d80; letter-spacing: .8px; }
.wide { letter-spacing: 1px; }
.hot { color: #4d8dff; }

.phone { width: 750px; height: 1334px; border-radius: 6px; overflow: hidden; background: #1a1a1a; box-shadow: 0 4px 50px rgba(35,35,50,.8); display: flex; flex-direction: column; color: #fff; position: relative; }
.content { flex: 1; padding: 0 32px; position: relative; }
.item { background: #242424; padding-left: 32px; position: relative; }
.fab { position: absolute; width: 80px; height: 80px; border-radius: 50%; background: #4d8dff; display: flex; align-items: center; }
.tabs { display: grid; grid-template-columns: repeat(3, 1fr); background: #151515; }
.tabs a { display: flex; flex-direction: column; align-items: center; }

.md { font-family: Roboto, sans-serif; }
.md-status { height: 40px; background: #1b1f24; display: flex; align-items: center; justify-content: flex-end; padding-right: 20px; font-size: 24px; }
.md-status span { padding-top: 2px; letter-spacing: .2px; margin-left: -1px; }
.md-sig { margin-left: 23px; }
.md-bat { margin: -3px 20px 0 28px; }
.md-title { height: 112px; background: #151515; font-size: 40px; font-weight: 500; line-height: 114px; padding-left: 32px; letter-spacing: -.15px; box-shadow: 0 1px 6px #151515; }
.md h1 { font-size: 48px; font-weight: 500; line-height: 60px; padding-top: 24px; height: 100px; white-space: nowrap; letter-spacing: -.05px; }
.md .item { height: 124px; padding-top: 19px; }
.md .item:nth-child(2) { height: 126px; }
.md .item:nth-child(2)::after { content: ""; display: block; height: 2px; background: #dedede; margin-top: 25px; }
.md h2 { font-size: 32px; line-height: 40px; letter-spacing: -.1px; }
.md p { font-size: 28px; line-height: 40px; color: #666; }
.md .fab { right: 36px; bottom: 36px; padding-left: 17px; gap: 6px; font-size: 28px; box-shadow: 0 6px 12px rgba(0,0,0,.4); }
.md .tabs { height: 112px; color: #2d2d2d; font-size: 24px; line-height: 30px; }
.md .tabs a { padding-top: 21px; gap: 13px; }
.md .tabs .on { padding-top: 15px; gap: 15px; color: #4d8dff; font-size: 28px; letter-spacing: -.1px; }

.ios-status { position: absolute; z-index: 1; left: 11px; right: 12px; top: 8px; height: 24px; display: flex; align-items: center; color: #000; font-size: 24px; font-weight: 500; }
.i-wifi { margin-left: 13px; }
.i-time { margin-left: 206px; width: 102px; white-space: nowrap; letter-spacing: -.9px; }
.i-pct { margin-left: auto; margin-right: 7px; font-weight: 400; letter-spacing: -.4px; }
.ios-title { height: 88px; background: #151515; border-bottom: 1px solid #090909; font-size: 34px; line-height: 87px; font-weight: 600; text-align: center; letter-spacing: -.9px; }
.ios h1 { font-size: 48px; font-weight: 500; line-height: 60px; padding-top: 25px; height: 100px; letter-spacing: -2px; word-spacing: 1px; white-space: nowrap; }
.ios .item { height: 117px; padding-top: 15px; }
.ios .item:nth-child(2)::after { content: ""; display: block; height: 1px; background: #000; margin-top: 17px; }
.ios .item:nth-child(3) { border-bottom: 1px solid #000; }
.ios h2 { font-size: 34px; line-height: 42px; letter-spacing: -1.100px; }
.ios p { font-size: 28px; line-height: 42px; color: #8a8a8e; letter-spacing: -.4px; }
.ios .fab { right: 36px; bottom: 35px; padding-left: 19px; gap: 8px; font-size: 26px; }
.ios .tabs { height: 99px; border-top: 1px solid #090909; color: #8a8a8a; font-size: 20px; line-height: 24px; font-weight: 500; }
.ios .tabs a { padding-top: 14px; gap: 8px; }
.ios .tabs .on { color: #4d8dff; }

.dock { position: absolute; left: 559px; top: 1702px; width: 1762px; height: 110px; border: 2px solid rgba(190,185,175,.3); border-radius: 12px; background: linear-gradient(90deg, #2e2929, #3a3230 15%, #5c5244 30%, #766d60 45%, #857b6e 66%, #6b6156 82%, #4a433e); display: flex; padding: 11px 0 0 10px; gap: 14px; box-shadow: 0 0 0 1px rgba(0,0,0,.5); }
.app { width: 66px; position: relative; }
.app svg { width: 66px; height: 66px; font-family: Inter, sans-serif; }
.run::after { content: ""; display: block; width: 8px; height: 8px; border-radius: 50%; background: #e0dcd5; margin: 7px auto 0; }
.badge { position: absolute; right: -6px; top: -5px; width: 29px; height: 29px; border-radius: 50%; background: #f24240; color: #fff; font-size: 17px; font-weight: 400; line-height: 29px; text-align: center; }
.sep { width: 2px; height: 70px; background: #aaa397; margin: 0 9px 0 11px; }
.s2 { margin: 0 12px 0 10px; }
.trash svg { margin-top: -3px; width: 60px; height: 70px; }
```
